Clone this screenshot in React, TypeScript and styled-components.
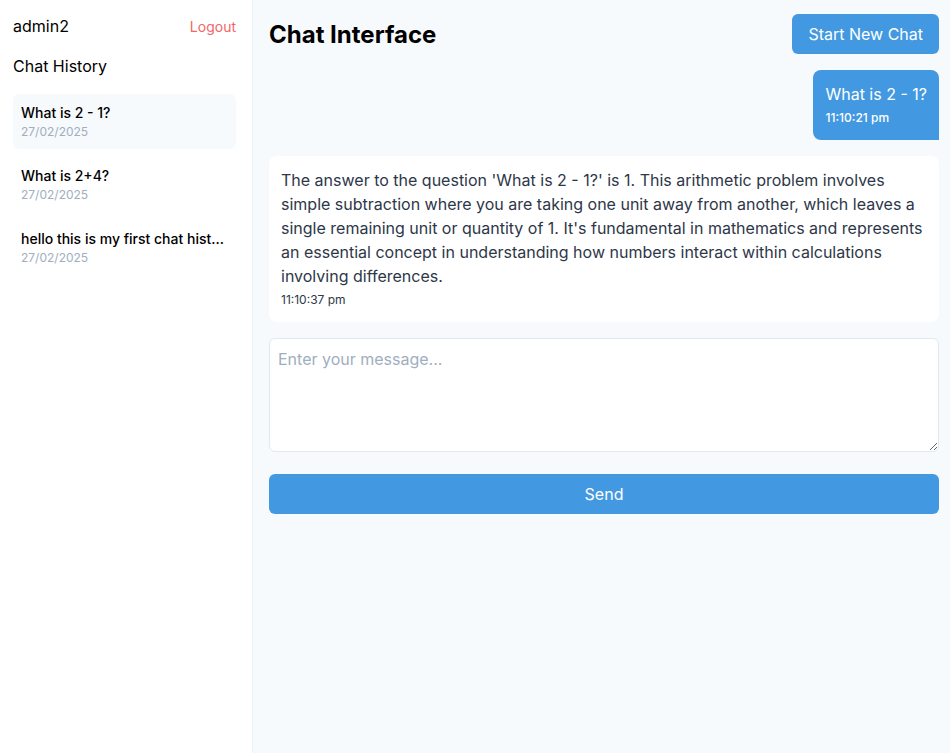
import React from 'react';
import styled, { createGlobalStyle } from 'styled-components';

const GlobalStyle = createGlobalStyle`
  html, body {
    margin: 0;
    padding: 0;
    height: 100%;
  }
  body {
    font-family: Inter, "Noto Sans", "Liberation Sans", sans-serif;
    color: #1a202c;
    background: #f7fafc;
  }
  #root {
    height: 100%;
  }
  * {
    box-sizing: border-box;
  }
`;

interface HistoryItem {
  title: string;
  date: string;
}

const history: HistoryItem[] = [
  { title: 'What is 2 - 1?', date: '27/02/2025' },
  { title: 'What is 2+4?', date: '27/02/2025' },
  { title: 'hello this is my first chat hist...', date: '27/02/2025' },
];

export default function App() {
  return (
    <>
      <GlobalStyle />
      <Layout>
        <Sidebar>
          <UserRow>
            <UserName>admin2</UserName>
            <LogoutLink>Logout</LogoutLink>
          </UserRow>
          <SidebarTitle>Chat History</SidebarTitle>
          <HistoryList>
            {history.map((item, i) => (
              <HistoryCard key={i} active={i === 0}>
                <HistoryTitle>{item.title}</HistoryTitle>
                <HistoryDate>{item.date}</HistoryDate>
              </HistoryCard>
            ))}
          </HistoryList>
        </Sidebar>

        <Main>
          <Header>
            <PageTitle>Chat Interface</PageTitle>
            <PrimaryButton>Start New Chat</PrimaryButton>
          </Header>

          <Messages>
            <UserBubble>
              <UserText>What is 2 - 1?</UserText>
              <UserTime>11:10:21 pm</UserTime>
            </UserBubble>
            <BotBubble>
              <BotText>
                The answer to the question 'What is 2 - 1?' is 1. This arithmetic problem involves simple
                subtraction where you are taking one unit away from another, which leaves a single remaining
                unit or quantity of 1. It's fundamental in mathematics and represents an essential concept in
                understanding how numbers interact within calculations involving differences.
              </BotText>
              <BotTime>11:10:37 pm</BotTime>
            </BotBubble>
          </Messages>

          <MessageInput placeholder="Enter your message..." />
          <SendButton>Send</SendButton>
        </Main>
      </Layout>
    </>
  );
}

const Layout = styled.div`
  display: flex;
  min-height: 100vh;
`;

const Sidebar = styled.aside`
  width: 253px;
  flex-shrink: 0;
  background: #ffffff;
  border-right: 1px solid #edf2f7;
  padding: 14px 16px 16px 13px;
`;

const UserRow = styled.div`
  display: flex;
  justify-content: space-between;
  align-items: center;
  height: 24px;
`;

const UserName = styled.span`
  font-size: 16px;
  color: #000;
`;

const LogoutLink = styled.span`
  font-size: 14px;
  color: #f56565;
  cursor: pointer;
`;

const SidebarTitle = styled.h2`
  margin: 16px 0 16px;
  font-size: 16px;
  font-weight: 400;
  line-height: 24px;
  color: #000;
`;

const HistoryList = styled.div`
  display: flex;
  flex-direction: column;
  gap: 8px;
`;

const HistoryCard = styled.div<{ active?: boolean }>`
  height: 55px;
  padding: 9px 8px;
  border-radius: 6px;
  background: ${(p) => (p.active ? '#f7fafc' : 'transparent')};
  cursor: pointer;
`;

const HistoryTitle = styled.div`
  font-size: 14px;
  line-height: 20px;
  font-weight: 500;
  color: #000;
  white-space: nowrap;
  overflow: hidden;
  text-overflow: ellipsis;
`;

const HistoryDate = styled.div`
  margin-top: 1px;
  font-size: 12px;
  line-height: 16px;
  color: #a0aec0;
`;

const Main = styled.main`
  flex: 1;
  display: flex;
  flex-direction: column;
  padding: 14px 11px 16px 16px;
  background: #f7fafc;
`;

const Header = styled.div`
  display: flex;
  justify-content: space-between;
  align-items: center;
  margin-bottom: 16px;
`;

const PageTitle = styled.h1`
  margin: 0;
  font-size: 24px;
  font-weight: 700;
  color: #000;
`;

const PrimaryButton = styled.button`
  height: 40px;
  padding: 0 16px;
  border: none;
  border-radius: 6px;
  background: #4299e1;
  color: #fff;
  font-family: inherit;
  font-size: 16px;
  font-weight: 400;
  cursor: pointer;
`;

const Messages = styled.div`
  display: flex;
  flex-direction: column;
  gap: 16px;
  margin-bottom: 16px;
`;

const UserBubble = styled.div`
  align-self: flex-end;
  background: #4299e1;
  color: #fff;
  padding: 12px 12px 14px;
  border-radius: 8px 8px 0 8px;
`;

const UserText = styled.div`
  font-size: 16px;
  line-height: 24px;
`;

const UserTime = styled.div`
  margin-top: 4px;
  font-size: 12px;
  line-height: 16px;
  font-weight: 500;
`;

const BotBubble = styled.div`
  background: #fff;
  padding: 12px 12px 14px;
  border-radius: 8px;
`;

const BotText = styled.div`
  font-size: 16px;
  line-height: 24px;
  color: #2d3748;
`;

const BotTime = styled.div`
  margin-top: 4px;
  font-size: 12px;
  line-height: 16px;
  color: #2d3748;
`;

const MessageInput = styled.textarea`
  display: block;
  width: 100%;
  height: 114px;
  padding: 8px 8px;
  border: 1px solid #e2e8f0;
  border-radius: 6px;
  background: #fff;
  font-family: inherit;
  font-size: 16px;
  line-height: 24px;
  color: #1a202c;
  resize: vertical;
  outline: none;

  &::placeholder {
    color: #a0aec0;
  }
`;

const SendButton = styled(PrimaryButton)`
  margin-top: 22px;
  width: 100%;
`;
